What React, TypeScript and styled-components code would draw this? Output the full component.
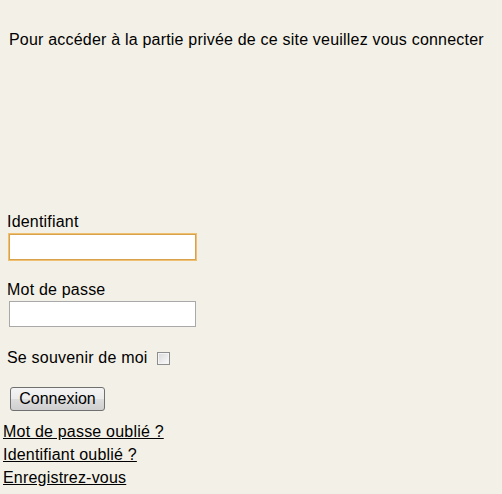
import React from 'react'
import styled, { createGlobalStyle } from 'styled-components'

const GlobalStyle = createGlobalStyle`
  html, body {
    margin: 0;
    padding: 0;
    background: #f3f0e7;
  }
  body {
    font-family: Arial, "Liberation Sans", sans-serif;
    font-size: 16px;
    letter-spacing: 0.2px;
    color: #000;
  }
`

const Page = styled.div`
  width: 502px;
  height: 494px;
  overflow: hidden;
  background: #f3f0e7;
`

const Intro = styled.p`
  margin: 0;
  padding: 31px 0 0 9px;
  line-height: 18px;
`

const LoginForm = styled.form`
  display: flex;
  flex-direction: column;
  align-items: flex-start;
  margin-top: 163px;
`

const Label = styled.label<{ $gap: number }>`
  display: block;
  margin: ${p => p.$gap}px 0 0 7px;
  line-height: 18px;
`

const TextInput = styled.input<{ $focused?: boolean; $gap: number }>`
  box-sizing: border-box;
  width: 187px;
  height: 26px;
  margin: ${p => p.$gap}px 0 0 9px;
  padding: 2px 4px;
  border: 1px solid ${p => (p.$focused ? '#d7a24a' : '#a9a9a9')};
  box-shadow: ${p => (p.$focused ? '0 0 0 1px #f0c072' : 'none')};
  background: #fff;
  font: inherit;
  outline: none;
`

const Remember = styled.div`
  display: flex;
  align-items: center;
  margin: 22px 0 0 7px;
  line-height: 18px;
`

const Check = styled.input`
  appearance: none;
  box-sizing: border-box;
  width: 13px;
  height: 13px;
  margin: 0 0 0 9px;
  border: 1px solid #8e8e8e;
  background: linear-gradient(135deg, #d8d8d8, #fbfbfb);
  box-shadow: inset 0 0 0 1px #f4f4f4;
`

const Submit = styled.button`
  box-sizing: border-box;
  width: 95px;
  height: 24px;
  margin: 20px 0 0 10px;
  padding: 0;
  border: 1px solid #707070;
  border-radius: 3px;
  background: linear-gradient(#f4f4f4 0%, #ebebeb 50%, #dddddd 51%, #cfcfcf 100%);
  font: inherit;
  color: #000;
`

const Links = styled.div`
  display: flex;
  flex-direction: column;
  gap: 5px;
  margin: 12px 0 0 3px;
`

const TextLink = styled.a`
  color: #000;
  text-decoration: underline;
  line-height: 18px;
`

export default function App() {
  return (
    <Page>
      <GlobalStyle />
      <Intro>Pour accéder à la partie privée de ce site veuillez vous connecter</Intro>
      <LoginForm onSubmit={e => e.preventDefault()}>
        <Label htmlFor="username" $gap={1}>Identifiant</Label>
        <TextInput id="username" type="text" $focused $gap={3} />
        <Label htmlFor="password" $gap={21}>Mot de passe</Label>
        <TextInput id="password" type="password" $gap={2} />
        <Remember>
          <label htmlFor="remember">Se souvenir de moi</label>
          <Check id="remember" type="checkbox" />
        </Remember>
        <Submit type="submit">Connexion</Submit>
        <Links>
          <TextLink href="#">Mot de passe oublié ?</TextLink>
          <TextLink href="#">Identifiant oublié ?</TextLink>
          <TextLink href="#">Enregistrez-vous</TextLink>
        </Links>
      </LoginForm>
    </Page>
  )
}
